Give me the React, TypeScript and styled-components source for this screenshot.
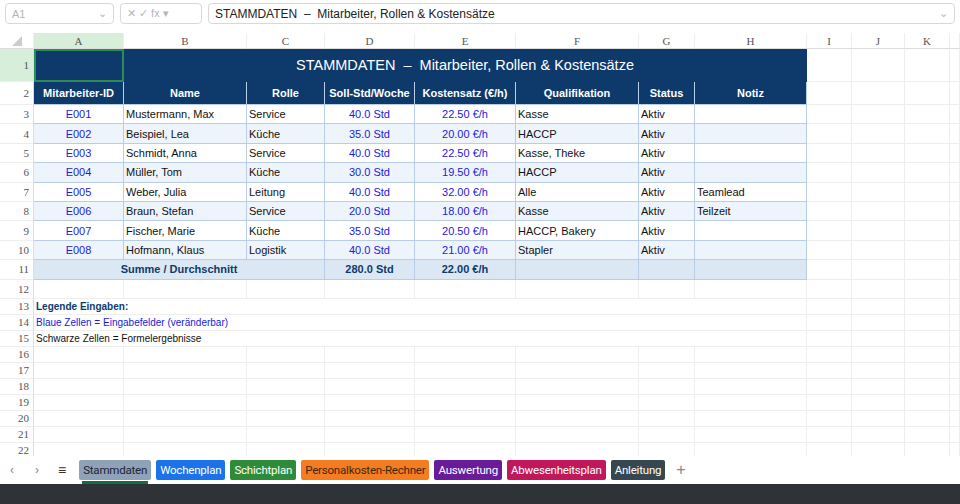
import React from "react";
import styled, { createGlobalStyle } from "styled-components";

const G = createGlobalStyle`
  body{margin:0;font-family:"Liberation Sans",Arial,sans-serif;background:#fff;}
`;
const cols = [90,123,78,90,101,123,56,112,45,53,45];
const Page = styled.div`width:960px;height:504px;display:flex;flex-direction:column;overflow:hidden;`;
const Top = styled.div`height:27px;flex:none;display:flex;align-items:center;gap:6px;padding:0 5px;`;
const Box = styled.div<{w?:number;grow?:boolean}>`height:19px;border:1px solid #d8d8d8;border-radius:4px;display:flex;align-items:center;padding:0 6px;font-size:12px;color:#222;
  ${p=>p.w?`width:${p.w}px;`:""}${p=>p.grow?"flex:1;":""}justify-content:space-between;`;
const Muted = styled.span`color:#b5b5b5;font-size:11px;`;
const Sheet = styled.div`height:429px;flex:none;overflow:hidden;display:grid;grid-template-columns:34px ${cols.map(c=>c+"px").join(" ")} 1fr;grid-template-rows:6px 16px 33px 23px repeat(9,19.4px) 19.4px repeat(11,16px);align-content:start;`;
const CH = styled.div<{sel?:boolean}>`font-family:"Liberation Serif",serif;font-size:11px;color:#555;display:flex;align-items:center;justify-content:center;background:${p=>p.sel?"#d7eedb":"#fff"};border-right:1px solid #eee;border-bottom:1px solid #ddd;`;
const RH = styled.div<{sel?:boolean}>`font-family:"Liberation Serif",serif;font-size:11px;color:#555;display:flex;align-items:center;justify-content:flex-end;padding-right:4px;background:${p=>p.sel?"#d7eedb":"#fff"};border-right:1px solid #ddd;border-bottom:1px solid #eee;`;
const Cell = styled.div<{bg?:string;c?:string;al?:string;b?:boolean;span?:number;bd?:string}>`
  grid-column:span ${p=>p.span||1};background:${p=>p.bg||"#fff"};color:${p=>p.c||"#111"};font-size:11px;
  font-weight:${p=>p.b?"bold":"normal"};display:flex;align-items:center;justify-content:${p=>p.al||"flex-start"};
  padding:0 2px;white-space:nowrap;overflow:hidden;border-right:1px solid ${p=>p.bd||"#eee"};border-bottom:1px solid ${p=>p.bd||"#eee"};`;
const Tabs = styled.div`height:28px;flex:none;display:flex;align-items:center;gap:5px;padding:0 0 0 8px;font-size:12px;color:#888;`;
const Tab = styled.div<{bg:string;c?:string}>`background:${p=>p.bg};color:${p=>p.c||"#fff"};padding:0 4px;height:20px;display:flex;align-items:center;border-radius:2px;font-size:11.5px;font-family:"Roboto",sans-serif;letter-spacing:-0.2px;position:relative;`;
const Under = styled.div`position:absolute;left:3px;right:3px;bottom:-4px;height:3px;background:#1e6b3a;`;
const Bottom = styled.div`height:20px;flex:none;background:#2f3236;`;

const data = [
  ["E001","Mustermann, Max","Service","40.0 Std","22.50 €/h","Kasse","Aktiv",""],
  ["E002","Beispiel, Lea","Küche","35.0 Std","20.00 €/h","HACCP","Aktiv",""],
  ["E003","Schmidt, Anna","Service","40.0 Std","22.50 €/h","Kasse, Theke","Aktiv",""],
  ["E004","Müller, Tom","Küche","30.0 Std","19.50 €/h","HACCP","Aktiv",""],
  ["E005","Weber, Julia","Leitung","40.0 Std","32.00 €/h","Alle","Aktiv","Teamlead"],
  ["E006","Braun, Stefan","Service","20.0 Std","18.00 €/h","Kasse","Aktiv","Teilzeit"],
  ["E007","Fischer, Marie","Küche","35.0 Std","20.50 €/h","HACCP, Bakery","Aktiv",""],
  ["E008","Hofmann, Klaus","Logistik","40.0 Std","21.00 €/h","Stapler","Aktiv",""],
];
const heads=["Mitarbeiter-ID","Name","Rolle","Soll-Std/Woche","Kostensatz (€/h)","Qualifikation","Status","Notiz"];
const letters="ABCDEFGHIJK".split("");
const NAVY="#0d3a6b", BD="#b9cde6", BLUE="#1a1ae0";
const Blank=()=> <><Cell/><Cell/><Cell/><Cell/></>;

export default function App(){
  return <Page><G/>
    <Top>
      <Box w={95}><Muted>A1</Muted><Muted>⌄</Muted></Box>
      <Box w={68}><Muted>✕ ✓ fx ▾</Muted></Box>
      <Box grow><span>STAMMDATEN&nbsp; –&nbsp; Mitarbeiter, Rollen &amp; Kostensätze</span><Muted>⌄</Muted></Box>
    </Top>
    <Sheet>
      {Array.from({length:13}).map((_,i)=><div key={"s"+i}/>)}
      <CH style={{fontSize:0}}><svg width="10" height="10"><path d="M10 0V10H0Z" fill="#ccc"/></svg></CH>
      {letters.map((l,i)=><CH key={l} sel={i===0}>{l}</CH>)}<CH/>
      <RH sel>1</RH>
      <Cell bg={NAVY} bd={NAVY} style={{outline:"2px solid #2e8b57",outlineOffset:-2}}/>
      <Cell span={7} bg={NAVY} bd={NAVY} c="#fff" al="center" style={{fontSize:14.5}}>STAMMDATEN&nbsp; –&nbsp; Mitarbeiter, Rollen &amp; Kostensätze</Cell>
      <Blank/>
      <RH>2</RH>
      {heads.map(h=><Cell key={h} bg={NAVY} bd={BD} c="#fff" al="center" b>{h}</Cell>)}
      <Blank/>
      {data.map((r,i)=>{const bg=i%2?"#eef4fb":"#fff";return <React.Fragment key={i}>
        <RH>{i+3}</RH>
        {r.map((v,j)=><Cell key={j} bg={bg} bd={BD} c={[0,3,4].includes(j)?BLUE:"#111"} al={[0,3,4].includes(j)?"center":"flex-start"}>{v}</Cell>)}
        <Blank/>
      </React.Fragment>;})}
      <RH>11</RH>
      <Cell span={3} bg="#dce7f4" bd={BD} c={NAVY} b al="center">Summe / Durchschnitt</Cell>
      <Cell bg="#dce7f4" bd={BD} c={NAVY} b al="center">280.0 Std</Cell>
      <Cell bg="#dce7f4" bd={BD} c={NAVY} b al="center">22.00 €/h</Cell>
      <Cell bg="#dce7f4" bd={BD}/><Cell bg="#dce7f4" bd={BD}/><Cell bg="#dce7f4" bd={BD}/>
      <Blank/>
      {Array.from({length:11}).map((_,i)=>{const n=i+12;const t=n===13?["Legende Eingaben:",NAVY,true]:n===14?["Blaue Zellen = Eingabefelder (veränderbar)",BLUE,false]:n===15?["Schwarze Zellen = Formelergebnisse","#111",false]:null;
        return <React.Fragment key={n}><RH>{n}</RH>
          {t?<Cell span={8} c={t[1] as string} b={t[2] as boolean} style={{overflow:"visible",fontSize:10}}>{t[0] as string}</Cell>:Array.from({length:8}).map((_,k)=><Cell key={k}/>)}
          <Blank/></React.Fragment>;})}
    </Sheet>
    <Tabs>
      <span style={{marginLeft:2}}>‹</span><span style={{marginLeft:16}}>›</span><span style={{margin:"0 8px 0 14px",color:"#333",fontSize:14}}>≡</span>
      <Tab bg="#8fa3b8" c="#223">Stammdaten<Under/></Tab>
      <Tab bg="#1a73e8">Wochenplan</Tab>
      <Tab bg="#2e8b3a">Schichtplan</Tab>
      <Tab bg="#f57c1f" c="#3a2a10">Personalkosten-Rechner</Tab>
      <Tab bg="#6a1b9a">Auswertung</Tab>
      <Tab bg="#c2185b">Abwesenheitsplan</Tab>
      <Tab bg="#37474f">Anleitung</Tab>
      <span style={{fontSize:16,marginLeft:6}}>+</span>
    </Tabs>
    <Bottom/>
  </Page>;
}
